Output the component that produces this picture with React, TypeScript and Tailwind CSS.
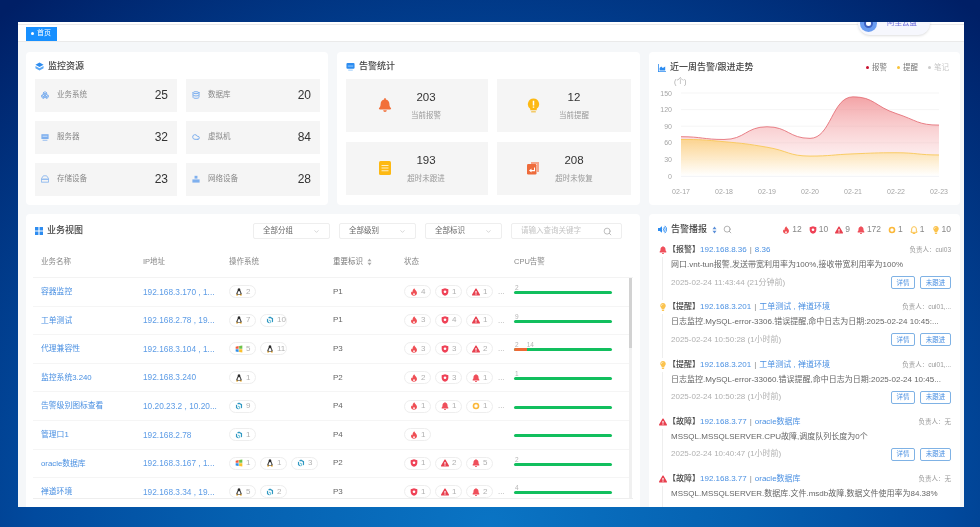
import { Cloud, Database, Search, Boxes, ChevronDown } from "lucide-react";
import { FaBell, FaExclamationTriangle, FaLightbulb, FaVolumeUp } from "react-icons/fa";
import type { ReactNode } from "react";

type Kind = "fire" | "shield" | "tri" | "bell" | "ring" | "lock" | "bulb";
type Os = "linux" | "win" | "cube";

const Penguin = () => (
  <svg viewBox="0 0 12 12" className="w-[8px] h-[8px]">
    <path d="M6 .5C4.4.5 4 2 4 3.4 4 5 2 7 2 9c0 1 1 1.600 4 1.600S10 10 10 9c0-2-2-4-2-5.600C8 2 7.600.5 6 .5z" fill="#2b2b2b" />
    <path d="M6 4.500c-1.200 0-2.200 2.400-2.200 4.200 0 .8 1 1.200 2.200 1.200s2.200-.4 2.200-1.200C8.200 6.900 7.200 4.500 6 4.500z" fill="#fff" />
    <path d="M1.500 10.200 4 9.400l.6 2H2zM10.500 10.200 8 9.400l-.6 2H10z" fill="#f0a81e" />
  </svg>
);

const Win = () => (
  <svg viewBox="0 0 12 12" className="w-[8px] h-[8px]">
    <path d="M1 2.500 5.400 1.600v4H1z" fill="#ef5b3c" />
    <path d="M6.200 1.500 11 .8v4.800H6.200z" fill="#6cc24a" />
    <path d="M1 6.400h4.400v4L1 9.600z" fill="#2f8fe8" />
    <path d="M6.200 6.400H11v4.800l-4.800-.7z" fill="#fbc02d" />
  </svg>
);

const Cube = () => (
  <svg viewBox="0 0 12 12" className="w-[8px] h-[8px]">
    <path d="M6 .8 10.600 3.400v5.200L8.800 9.700V4.500L6 2.900 4.600 3.700 3 2.700z" fill="#2f97c1" />
    <path d="M1.400 3.800 3.200 4.900v3.500l2 1.100v1.700L1.400 9z" fill="#2f97c1" />
    <path d="M4.400 5.200 7.600 7v3.300L6.400 11V7.700L4.400 6.600z" fill="#5bbcd6" />
  </svg>
);

const Flame = ({ className }: { className: string }) => (
  <svg viewBox="0 0 12 12" className={className}>
    <path d="M6.500.5c.3 2 2 2.700 3.300 4.700 1.500 2.500.4 6.300-3.800 6.300S.7 8 2.300 5.200c.3.700.7 1.100 1.300 1.300C3.500 4.300 4.700 2 6.500.5z" fill="currentColor" />
    <path d="M6 7.500c-1 .8-1.500 1.500-1.500 2.300 0 1 3 1 3 0 0-.8-.5-1.500-1.500-2.300z" fill="#fff" />
  </svg>
);

const Shield = ({ className }: { className: string }) => (
  <svg viewBox="0 0 12 12" className={className}>
    <path d="M6 .5 11 2v4c0 3-2.200 4.700-5 5.600C3.200 10.700 1 9 1 6V2z" fill="currentColor" />
    <circle cx="6" cy="5.600" r="2" fill="#fff" />
  </svg>
);

const Ring = ({ className }: { className: string }) => (
  <svg viewBox="0 0 12 12" className={className}>
    <circle cx="6" cy="6" r="3.800" fill="none" stroke="currentColor" strokeWidth="2.400" />
  </svg>
);

const Lock = ({ className }: { className: string }) => (
  <svg viewBox="0 0 12 12" className={className}>
    <path d="M6 1a3.500 3.500 0 0 0-3.500 3.500V8H1.500v1.500h9V8h-1V4.500A3.500 3.500 0 0 0 6 1z" fill="none" stroke="currentColor" strokeWidth="1.500" />
    <path d="M4 10.500h4V12H4z" fill="currentColor" />
  </svg>
);

const Alert = ({ kind, size = "w-[8px] h-[8px]" }: { kind: Kind; size?: string }) => {
  if (kind === "fire") return <Flame className={size + " text-[#ef4f55]"} />;
  if (kind === "shield") return <Shield className={size + " text-[#ef4156]"} />;
  if (kind === "tri") return <FaExclamationTriangle className={size + " text-[#e8404f]"} />;
  if (kind === "bell") return <FaBell className={size + " text-[#ef4f5b]"} />;
  if (kind === "ring") return <Ring className={size + " text-[#fbb83a]"} />;
  if (kind === "lock") return <Lock className={size + " text-[#fbc34e]"} />;
  return <FaLightbulb className={size + " text-[#fbc34e]"} />;
};

const OsIcon = ({ os }: { os: Os }) => {
  if (os === "linux") return <Penguin />;
  if (os === "win") return <Win />;
  return <Cube />;
};

const Chip = ({ icon, count }: { icon: ReactNode; count: number }) => (
  <span className="flex items-center gap-[3px] w-[27px] h-[13px] pl-[5px] rounded-full border border-[#eeeeee] text-[8px] text-[#b0b0b0]">
    {icon}
    {count}
  </span>
);

const Title = ({ icon, text }: { icon: ReactNode; text: string }) => (
  <div className="flex items-center gap-[4px] text-[9px] font-medium text-[#444]">
    {icon}
    {text}
  </div>
);

const Sort = ({ color }: { color: string }) => (
  <svg viewBox="0 0 6 10" className="w-[5px] h-[8px]">
    <path d="M3 .5 5.500 4H.5zM3 9.500.5 6h5z" fill={color} />
  </svg>
);

const CubeTitle = () => (
  <svg viewBox="0 0 10 10" className="w-[9px] h-[9px]">
    <path d="M5 .5 9.500 3 5 5.500.5 3z" fill="#2d8cf0" />
    <path d="M.5 4.500 5 7l4.500-2.500V7L5 9.500.5 7z" fill="#5ba8f5" />
  </svg>
);

const ScreenTitle = () => (
  <svg viewBox="0 0 10 10" className="w-[9px] h-[9px]">
    <rect x=".5" y="1" width="9" height="6.500" rx="1.200" fill="#2d8cf0" />
    <rect x="2" y="4" width="6" height="1" fill="#9fd0ff" />
    <path d="M2.500 8.500h5V9.500h-5z" fill="#8ec5fa" />
  </svg>
);

const tint = "w-[8px] h-[8px] text-[#7fb0ee]";

const resources: { label: string; value: number; icon: ReactNode }[] = [
  { label: "业务系统", value: 25, icon: <Boxes strokeWidth={3} className={tint} /> },
  { label: "数据库", value: 20, icon: <Database strokeWidth={3} className={tint} /> },
  {
    label: "服务器",
    value: 32,
    icon: (
      <svg viewBox="0 0 10 10" className={tint}>
        <rect x=".5" y="1.500" width="9" height="6" fill="currentColor" />
        <path d="M2 3.500h6v1H2z" fill="#dbe9fb" />
        <path d="M2 8.500h6v1H2z" fill="currentColor" />
      </svg>
    ),
  },
  { label: "虚拟机", value: 84, icon: <Cloud strokeWidth={3} className={tint} /> },
  {
    label: "存储设备",
    value: 23,
    icon: (
      <svg viewBox="0 0 10 10" className={tint}>
        <path d="M3 1h4l2.500 3.500V9h-9V4.500z" fill="none" stroke="currentColor" />
        <path d="M.5 4.500h9V6h-9z" fill="currentColor" />
      </svg>
    ),
  },
  {
    label: "网络设备",
    value: 28,
    icon: (
      <svg viewBox="0 0 10 10" className={tint}>
        <path d="M3.200 1h3.600v3.500H3.200z" fill="currentColor" />
        <path d="M.5 5.500h9V9.500h-9z" fill="currentColor" />
      </svg>
    ),
  },
];

const BellBig = () => <FaBell className="w-[14px] h-[14px] text-[#f2703a]" />;
const BulbBig = () => (
  <svg viewBox="0 0 14 16" className="w-[13px] h-[15px]">
    <path d="M7 .5a6 6 0 0 0-3.500 10.900V13h7v-1.600A6 6 0 0 0 7 .5z" fill="#fdb913" />
    <path d="M4.500 14h5v1.500h-5z" fill="#f3c65c" />
    <path d="M6.200 3h1.600v5H6.200zM6.200 9h1.600v1.500H6.200z" fill="#fff" />
  </svg>
);
const DocBig = () => (
  <svg viewBox="0 0 12 14" className="w-[12px] h-[14px]">
    <rect width="12" height="14" rx="1.500" fill="#fdb913" />
    <path d="M2.500 4h7v1h-7zM2.500 6.600h7v1h-7zM2.500 9.200h7v1h-7z" fill="#fff" fillOpacity=".75" />
  </svg>
);
const ReplayBig = () => (
  <svg viewBox="0 0 14 14" className="w-[14px] h-[14px]">
    <path d="M5 1h8v10h-2V3H5z" fill="#f6a58a" />
    <rect x="1" y="3" width="9.500" height="10.500" rx="1.200" fill="#ee6b3b" />
    <path d="M8 6.500v2.500H5.500V7.500L3 9.500l2.500 2v-1.300H9V6.500z" fill="#fff" />
  </svg>
);

const stats = [
  { value: 203, label: "当前报警", icon: <BellBig />, inset: "pl-[32px]" },
  { value: 12, label: "当前提醒", icon: <BulbBig />, inset: "pl-[29px]" },
  { value: 193, label: "超时未跟进", icon: <DocBig />, inset: "pl-[32px]" },
  { value: 208, label: "超时未恢复", icon: <ReplayBig />, inset: "pl-[29px]" },
];

const rows: {
  name: string;
  ip: string;
  os: [Os, number][];
  level: string;
  status: [Kind, number][];
  more: boolean;
  cpu: string[];
  hot?: boolean;
}[] = [
  { name: "容器监控", ip: "192.168.3.170 , 1...", os: [["linux", 2]], level: "P1", status: [["fire", 4], ["shield", 1], ["tri", 1]], more: true, cpu: ["2"] },
  { name: "工单测试", ip: "192.168.2.78 , 19...", os: [["linux", 7], ["cube", 10]], level: "P1", status: [["fire", 3], ["shield", 4], ["tri", 1]], more: true, cpu: ["9"] },
  { name: "代理兼容性", ip: "192.168.3.104 , 1...", os: [["win", 5], ["linux", 11]], level: "P3", status: [["fire", 3], ["shield", 3], ["tri", 2]], more: true, cpu: ["2", "14"], hot: true },
  { name: "监控系统3.240", ip: "192.168.3.240", os: [["linux", 1]], level: "P2", status: [["fire", 2], ["shield", 3], ["bell", 1]], more: true, cpu: ["1"] },
  { name: "告警级别图标查看", ip: "10.20.23.2 , 10.20...", os: [["cube", 9]], level: "P4", status: [["fire", 1], ["bell", 1], ["ring", 1]], more: true, cpu: [] },
  { name: "管理口1", ip: "192.168.2.78", os: [["cube", 1]], level: "P4", status: [["fire", 1]], more: false, cpu: [] },
  { name: "oracle数据库", ip: "192.168.3.167 , 1...", os: [["win", 1], ["linux", 1], ["cube", 3]], level: "P2", status: [["shield", 1], ["tri", 2], ["bell", 5]], more: false, cpu: ["2"] },
  { name: "禅道环境", ip: "192.168.3.34 , 19...", os: [["linux", 5], ["cube", 2]], level: "P3", status: [["shield", 1], ["tri", 1], ["bell", 2]], more: true, cpu: ["4"] },
];

const broadcastTotals: [Kind, number][] = [["fire", 12], ["shield", 10], ["tri", 9], ["bell", 172], ["ring", 1], ["lock", 1], ["bulb", 10]];

const feed: { kind: Kind; tag: string; ip: string; target: string; owner: string; msg: string; time: string }[] = [
  { kind: "bell", tag: "【报警】", ip: "192.168.8.36", target: "8.36", owner: "cui03", msg: "网口.vnt-tun报警,发送带宽利用率为100%,接收带宽利用率为100%", time: "2025-02-24 11:43:44 (21分钟前)" },
  { kind: "bulb", tag: "【提醒】", ip: "192.168.3.201", target: "工单测试 , 禅道环境", owner: "cui01,...", msg: "日志监控.MySQL-error-3306.错误提醒,命中日志为日期:2025-02-24 10:45:...", time: "2025-02-24 10:50:28 (1小时前)" },
  { kind: "bulb", tag: "【提醒】", ip: "192.168.3.201", target: "工单测试 , 禅道环境", owner: "cui01,...", msg: "日志监控.MySQL-error-33060.错误提醒,命中日志为日期:2025-02-24 10:45...", time: "2025-02-24 10:50:28 (1小时前)" },
  { kind: "tri", tag: "【故障】", ip: "192.168.3.77", target: "oracle数据库", owner: "无", msg: "MSSQL.MSSQLSERVER.CPU故障,调度队列长度为0个", time: "2025-02-24 10:40:47 (1小时前)" },
  { kind: "tri", tag: "【故障】", ip: "192.168.3.77", target: "oracle数据库", owner: "无", msg: "MSSQL.MSSQLSERVER.数据库.文件.msdb故障,数据文件使用率为84.38%", time: "" },
];

// chart coordinates are the page's, shifted by the svg origin
const cx = (i: number) => 32 + i * 43;
const cy = (v: number) => 101 - (v * 83) / 150;
const days = ["02-17", "02-18", "02-19", "02-20", "02-21", "02-22", "02-23"];
const redVals = [71, 66, 89, 68, 143, 113, 92];
const yellowVals = [66, 62, 52, 36, 40, 42, 38];

function smooth(vals: number[]) {
  const pts = vals.map((v, i) => [cx(i), cy(v)]);
  const slope = pts.map((p, i) => {
    if (i === 0 || i === pts.length - 1) return 0;
    const a = pts[i - 1][1] - p[1];
    const b = pts[i + 1][1] - p[1];
    if (a * b > 0) return 0;
    return (pts[i + 1][1] - pts[i - 1][1]) / 86;
  });
  let d = "M" + pts[0][0] + " " + pts[0][1];
  for (let i = 1; i < pts.length; i++) {
    const c = 21;
    d += " C" + (pts[i - 1][0] + c) + " " + (pts[i - 1][1] + slope[i - 1] * c) + " " + (pts[i][0] - c) + " " + (pts[i][1] - slope[i] * c) + " " + pts[i][0] + " " + pts[i][1];
  }
  return d;
}

const Chart = () => {
  const red = smooth(redVals);
  const yellow = smooth(yellowVals);
  const close = " L" + cx(6) + " " + cy(0) + " L" + cx(0) + " " + cy(0) + " Z";
  return (
    <svg viewBox="0 0 311 129" className="w-[311px] h-[129px]">
      <defs>
        <linearGradient id="redFill" x1="0" y1="0" x2="0" y2="1">
          <stop offset="0" stopColor="#ee7c80" stopOpacity=".7" />
          <stop offset=".75" stopColor="#f7b5b8" stopOpacity=".25" />
          <stop offset="1" stopColor="#ffffff" stopOpacity="0" />
        </linearGradient>
        <linearGradient id="yellowFill" x1="0" y1="0" x2="0" y2="1">
          <stop offset="0" stopColor="#fcd27e" stopOpacity=".8" />
          <stop offset="1" stopColor="#ffffff" stopOpacity=".85" />
        </linearGradient>
      </defs>
      <text x="25" y="9" fontSize="7.5" fill="#aaa">(个)</text>
      {[0, 30, 60, 90, 120, 150].map((v) => (
        <g key={v}>
          <line x1={cx(0)} x2={cx(6)} y1={cy(v)} y2={cy(v)} stroke={v === 0 ? "#dfe3ea" : "#f0f0f0"} strokeWidth=".7" />
          <text x="23" y={cy(v) + 2.500} fontSize="7" fill="#a5a5a5" textAnchor="end">{v}</text>
        </g>
      ))}
      <path d={red + close} fill="url(#redFill)" />
      <path d={yellow + close} fill="url(#yellowFill)" />
      <path d={red} fill="none" stroke="#e5737a" strokeWidth=".9" />
      <path d={yellow} fill="none" stroke="#f8c858" strokeWidth=".9" />
      {days.map((d, i) => (
        <text key={d} x={cx(i)} y="118.500" fontSize="7" fill="#a5a5a5" textAnchor="middle">{d}</text>
      ))}
    </svg>
  );
};

const Filter = ({ text }: { text: string }) => (
  <div className="flex items-center justify-between w-[77px] h-[16px] px-[9px] border border-[#eeeeee] rounded-[2px] text-[7.5px] text-[#666]">
    {text}
    <ChevronDown className="w-[7px] h-[7px] text-[#bbb]" />
  </div>
);

export default function App() {
  return (
    <div className="h-[527px] w-[980px] overflow-hidden pl-[18px] pt-[22px] pb-[20px] bg-[radial-gradient(ellipse_75%_130%_at_50%_100%,#0a74c4_0%,#0560b0_35%,#014a9e_62%,#001f66_100%)] font-['Liberation_Sans','Noto_Sans_CJK_SC',sans-serif]">
      <div className="flex flex-col h-full w-[946px] overflow-hidden bg-[#f5f7f9] blur-[0.5px]">
        {/* tab bar */}
        <div className="shrink-0 bg-white pt-[2px]">
          <div className="flex justify-between h-[18px] border-t border-[#eaeaea] border-b pl-[8px] pr-[34px]">
            <div className="relative flex items-center gap-[3px] w-[31px] h-[14px] mt-[1.5px] px-[5px] bg-[#1890ff] text-[7px] text-white">
              <span className="w-[3px] h-[3px] rounded-full bg-white" />
              首页
            </div>
            <div className="relative flex items-center gap-[10px] w-[72px] h-[24px] -mt-[14px] pl-[2px] rounded-full bg-[#f6f7fd] shadow-sm text-[7.5px] text-[#6f6fe0]">
              <span className="flex items-center justify-center w-[17px] h-[17px] rounded-full bg-[#6a9cf0]">
                <span className="w-[9px] h-[9px] rounded-full border-2 border-[#3b5fc0] bg-white" />
              </span>
              阿里云盘
            </div>
          </div>
        </div>

        <div className="flex-1 min-h-0 flex flex-col gap-[9px] pt-[10px] pl-[8px] pr-[4px]">
          {/* top cards */}
          <div className="shrink-0 grid grid-cols-[302px_303px_311px] gap-[9px] h-[153px]">
            <div className="bg-white rounded-[4px] pt-[8px] px-[9px]">
              <Title icon={<CubeTitle />} text="监控资源" />
              <div className="grid grid-cols-[142px_134px] gap-x-[9px] gap-y-[9px] mt-[5px]">
                {resources.map((item) => (
                  <div key={item.label} className="flex items-center h-[33px] pl-[6px] pr-[9px] bg-[#f5f5f5]">
                    {item.icon}
                    <span className="ml-[8px] text-[7.5px] text-[#888]">{item.label}</span>
                    <span className="ml-auto text-[12px] font-medium text-[#333]">{item.value}</span>
                  </div>
                ))}
              </div>
            </div>

            <div className="bg-white rounded-[4px] pt-[8px] px-[9px]">
              <Title icon={<ScreenTitle />} text="告警统计" />
              <div className="grid grid-cols-[142px_134px] gap-x-[9px] gap-y-[10px] mt-[5px]">
                {stats.map((s) => (
                  <div key={s.label} className={"flex items-center h-[53px] bg-[#f5f5f5] " + s.inset}>
                    <span className="flex justify-center w-[14px]">{s.icon}</span>
                    <div className="flex flex-col items-center w-[58px] ml-[5px]">
                      <span className="text-[11.5px] font-medium text-[#333]">{s.value}</span>
                      <span className="mt-[4px] text-[7.5px] text-[#999]">{s.label}</span>
                    </div>
                  </div>
                ))}
              </div>
            </div>

            <div className="bg-white rounded-[4px] pt-[9px]">
              <div className="flex items-center justify-between pl-[9px] pr-[11px]">
                <Title icon={<svg viewBox="0 0 10 10" className="w-[8px] h-[8px]"><path d="M0 0h1v9h9v1H0z" fill="#2d8cf0" /><path d="M2 8V5l2-2 2 2 3-2v5z" fill="#2d8cf0" /></svg>} text="近一周告警/跟进走势" />
                <div className="flex items-center gap-[10px] text-[7.5px] text-[#777]">
                  <span className="flex items-center gap-[3px]"><i className="w-[3px] h-[3px] rounded-full bg-[#c8102e]" />报警</span>
                  <span className="flex items-center gap-[3px]"><i className="w-[3px] h-[3px] rounded-full bg-[#f8c33a]" />提醒</span>
                  <span className="flex items-center gap-[3px] text-[#c8c8c8]"><i className="w-[3px] h-[3px] rounded-full bg-[#cccccc]" />笔记</span>
                </div>
              </div>
              <Chart />
            </div>
          </div>

          {/* bottom cards */}
          <div className="flex-1 min-h-0 grid grid-cols-[614px_311px] gap-[9px]">
            <div className="bg-white rounded-t-[4px] px-[7px] flex flex-col h-[293px]">
              <div className="flex items-center justify-between h-[33px] pl-[2px] pr-[11px] pt-[1px]">
                <Title icon={<svg viewBox="0 0 10 10" className="w-[8px] h-[8px]"><path d="M0 0h4.300v4.300H0zM5.700 0H10v4.300H5.700zM0 5.700h4.300V10H0zM5.700 5.700H10V10H5.700z" fill="#2d8cf0" /></svg>} text="业务视图" />
                <div className="flex items-center gap-[9px]">
                  <Filter text="全部分组" />
                  <Filter text="全部级别" />
                  <Filter text="全部标识" />
                  <div className="flex items-center justify-between w-[111px] h-[16px] px-[9px] border border-[#eeeeee] rounded-[2px] text-[7.5px] text-[#c4c4c4]">
                    请输入查询关键字
                    <Search className="w-[9px] h-[9px] text-[#aaa]" />
                  </div>
                </div>
              </div>

              <div className="grid grid-cols-[102px_86px_104px_71px_110px_1fr] items-center h-[31px] pl-[8px] text-[7.5px] text-[#888] border-b border-[#f3f3f3]">
                <span>业务名称</span>
                <span>IP地址</span>
                <span>操作系统</span>
                <span className="flex items-center gap-[4px] text-[#777]">重要标识<Sort color="#aaaaaa" /></span>
                <span>状态</span>
                <span>CPU告警</span>
              </div>

              <div className="flex h-[221px] overflow-hidden border-b border-[#eeeeee]">
                <div className="flex-1">
                  {rows.map((r) => (
                    <div key={r.name} className="grid grid-cols-[102px_86px_104px_71px_110px_1fr] items-center h-[28.6px] shrink-0 pl-[8px] text-[7.8px] border-b border-[#f5f5f5]">
                      <span className="text-[#4a90e2]">{r.name}</span>
                      <span className="text-[8.3px] text-[#5d9ce6]">{r.ip}</span>
                      <div className="flex gap-[4px]">
                        {r.os.map(([os, n], i) => (
                          <Chip key={i} icon={<OsIcon os={os} />} count={n} />
                        ))}
                      </div>
                      <span className="text-[8px] text-[#666]">{r.level}</span>
                      <div className="flex items-center gap-[4px]">
                        {r.status.map(([k, n], i) => (
                          <Chip key={i} icon={<Alert kind={k} />} count={n} />
                        ))}
                        {r.more && <span className="ml-[1px] text-[#aaa]">...</span>}
                      </div>
                      <div className="w-[98px] pb-[5px]">
                        <div className="flex h-[7px] gap-[8px] pl-[1px] text-[6.5px] leading-[7px] text-[#b5b5b5]">
                          {r.cpu.map((c) => <span key={c}>{c}</span>)}
                        </div>
                        <div className="flex h-[3px] rounded-full overflow-hidden bg-[#12bf5e]">
                          {r.hot && <span className="w-[13px] bg-[#ee6a35]" />}
                        </div>
                      </div>
                    </div>
                  ))}
                </div>
                <div className="w-[3px] mr-[1px] bg-[#f0f0f0]">
                  <div className="h-[70px] bg-[#d2d2d2]" />
                </div>
              </div>
            </div>

            <div className="bg-white rounded-t-[4px] pl-[9px] pr-[9px] h-[293px] overflow-hidden">
              <div className="flex items-center h-[29px] pt-[2px]">
                <Title icon={<FaVolumeUp className="w-[9px] h-[9px] text-[#2d8cf0]" />} text="告警播报" />
                <span className="ml-[5px]"><Sort color="#5b8fd8" /></span>
                <Search className="ml-[6px] w-[9px] h-[9px] text-[#999]" />
                <div className="ml-auto flex items-center gap-[7px] text-[8.5px] text-[#888]">
                  {broadcastTotals.map(([k, n]) => (
                    <span key={k} className="flex items-center gap-[2px]">
                      <Alert kind={k} />
                      {n}
                    </span>
                  ))}
                </div>
              </div>

              {feed.map((f, i) => (
                <div key={i} className="flex h-[57.25px]">
                  <div className="flex flex-col items-center w-[9px] shrink-0 pt-[3px]">
                    <Alert kind={f.kind} />
                    <span className="flex-1 mt-[3px] w-px bg-[#eeeeee]" />
                  </div>
                  <div className="flex-1 min-w-0 pl-[1px]">
                    <div className="flex items-center h-[14px] text-[8px]">
                      <span className="font-medium text-[#444]">{f.tag}</span>
                      <span className="text-[#4a90e2]">{f.ip}</span>
                      <span className="mx-[3px] text-[#888]">|</span>
                      <span className="text-[#4a90e2]">{f.target}</span>
                      <span className="ml-auto text-[6.5px] text-[#999]">负责人：{f.owner}</span>
                    </div>
                    <div className="flex items-center h-[16px] pl-[3px] text-[8px] text-[#666] whitespace-nowrap">{f.msg}</div>
                    {f.time && (
                      <div className="flex items-center justify-between h-[19px] pl-[3px] text-[8px] text-[#b0b0b0]">
                        {f.time}
                        <div className="flex gap-[5px]">
                          <span className="flex items-center justify-center w-[24px] h-[13px] border border-[#7fb2e5] rounded-[2px] text-[6.5px] text-[#4a90e2]">详情</span>
                          <span className="flex items-center justify-center w-[31px] h-[13px] border border-[#7fb2e5] rounded-[2px] text-[6.5px] text-[#4a90e2]">未跟进</span>
                        </div>
                      </div>
                    )}
                  </div>
                </div>
              ))}
            </div>
          </div>
        </div>
      </div>
    </div>
  );
}
